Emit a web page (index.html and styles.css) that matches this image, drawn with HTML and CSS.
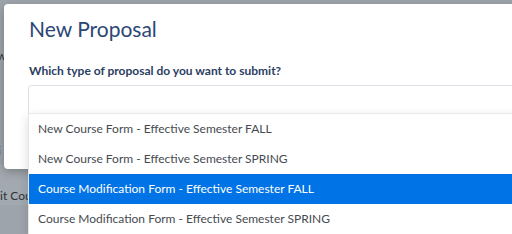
FILE: index.html
```html
<!DOCTYPE html>
<html lang="en">
<head>
  <meta charset="UTF-8">
  <title>New Proposal</title>
  <link rel="stylesheet" href="styles.css">
</head>
<body>
  <div class="page-behind">
    <div class="behind-row r1"></div>
    <div class="behind-row r2">w</div>
    <div class="behind-row r3"></div>
    <div class="behind-row r4">i</div>
    <div class="behind-row r5">it Course</div>
  </div>

  <div class="modal">
    <h1 class="modal-title">New Proposal</h1>
    <label class="field-label">Which type of proposal do you want to submit?</label>
    <div class="select">
      <div class="select-input"></div>
      <ul class="select-menu">
        <li class="option">New Course Form - Effective Semester FALL</li>
        <li class="option">New Course Form - Effective Semester SPRING</li>
        <li class="option active">Course Modification Form - Effective Semester FALL</li>
        <li class="option">Course Modification Form - Effective Semester SPRING</li>
      </ul>
    </div>
  </div>
</body>
</html>
```

FILE: styles.css
```css
body {
  margin: 0;
  width: 512px;
  height: 234px;
  overflow: hidden;
  position: relative;
  background-color: #9ea4ab;
  font-family: Lato, 'Open Sans', sans-serif;
}

.page-behind {
  display: flex;
  flex-direction: column;
}

.behind-row {
  color: #2f3338;
  font-size: 12px;
  white-space: nowrap;
}

.r1 { height: 27px; }
.r2 { height: 36px; line-height: 58px; margin-left: -3px; }
.r3 { height: 72px; }
.r4 { height: 30px; line-height: 32px; margin-left: -2px; }
.r5 { height: 40px; line-height: 62px; margin-left: 0; background-color: #a3a9b0; }

.modal {
  position: absolute;
  top: 4px;
  left: 4px;
  width: 620px;
  height: 165px;
  padding: 12px 25px 0;
  box-sizing: border-box;
  background-color: #fff;
  border-radius: 4px;
  box-shadow: 0 3px 10px rgba(0,0,0,0.25);
}

.modal-title {
  margin: 0;
  font-size: 21px;
  font-weight: 400;
  line-height: 26px;
  color: #2b4774;
}

.field-label {
  display: block;
  margin-top: 21px;
  font-size: 12px;
  font-weight: 700;
  line-height: 16px;
  color: #2b4063;
}

.select {
  position: relative;
  margin-top: 6px;
  margin-left: -1px;
}

.select-input {
  height: 27px;
  border: 1px solid #dde2e9;
  border-bottom: none;
  border-radius: 4px 4px 0 0;
}

.select-menu {
  position: absolute;
  top: 28px;
  left: 0;
  right: 0;
  margin: 0;
  padding: 0;
  list-style: none;
  background-color: #fff;
  border-top: 1px solid #e6e9ee;
  border-left: 1px solid #e3e6ea;
  box-shadow: 0 4px 10px rgba(0,0,0,0.15);
}

.option {
  height: 30px;
  line-height: 30px;
  padding-left: 9px;
  font-size: 12px;
  color: #464a50;
}

.option.active {
  background-color: #0073e6;
  color: #fff;
}
```
